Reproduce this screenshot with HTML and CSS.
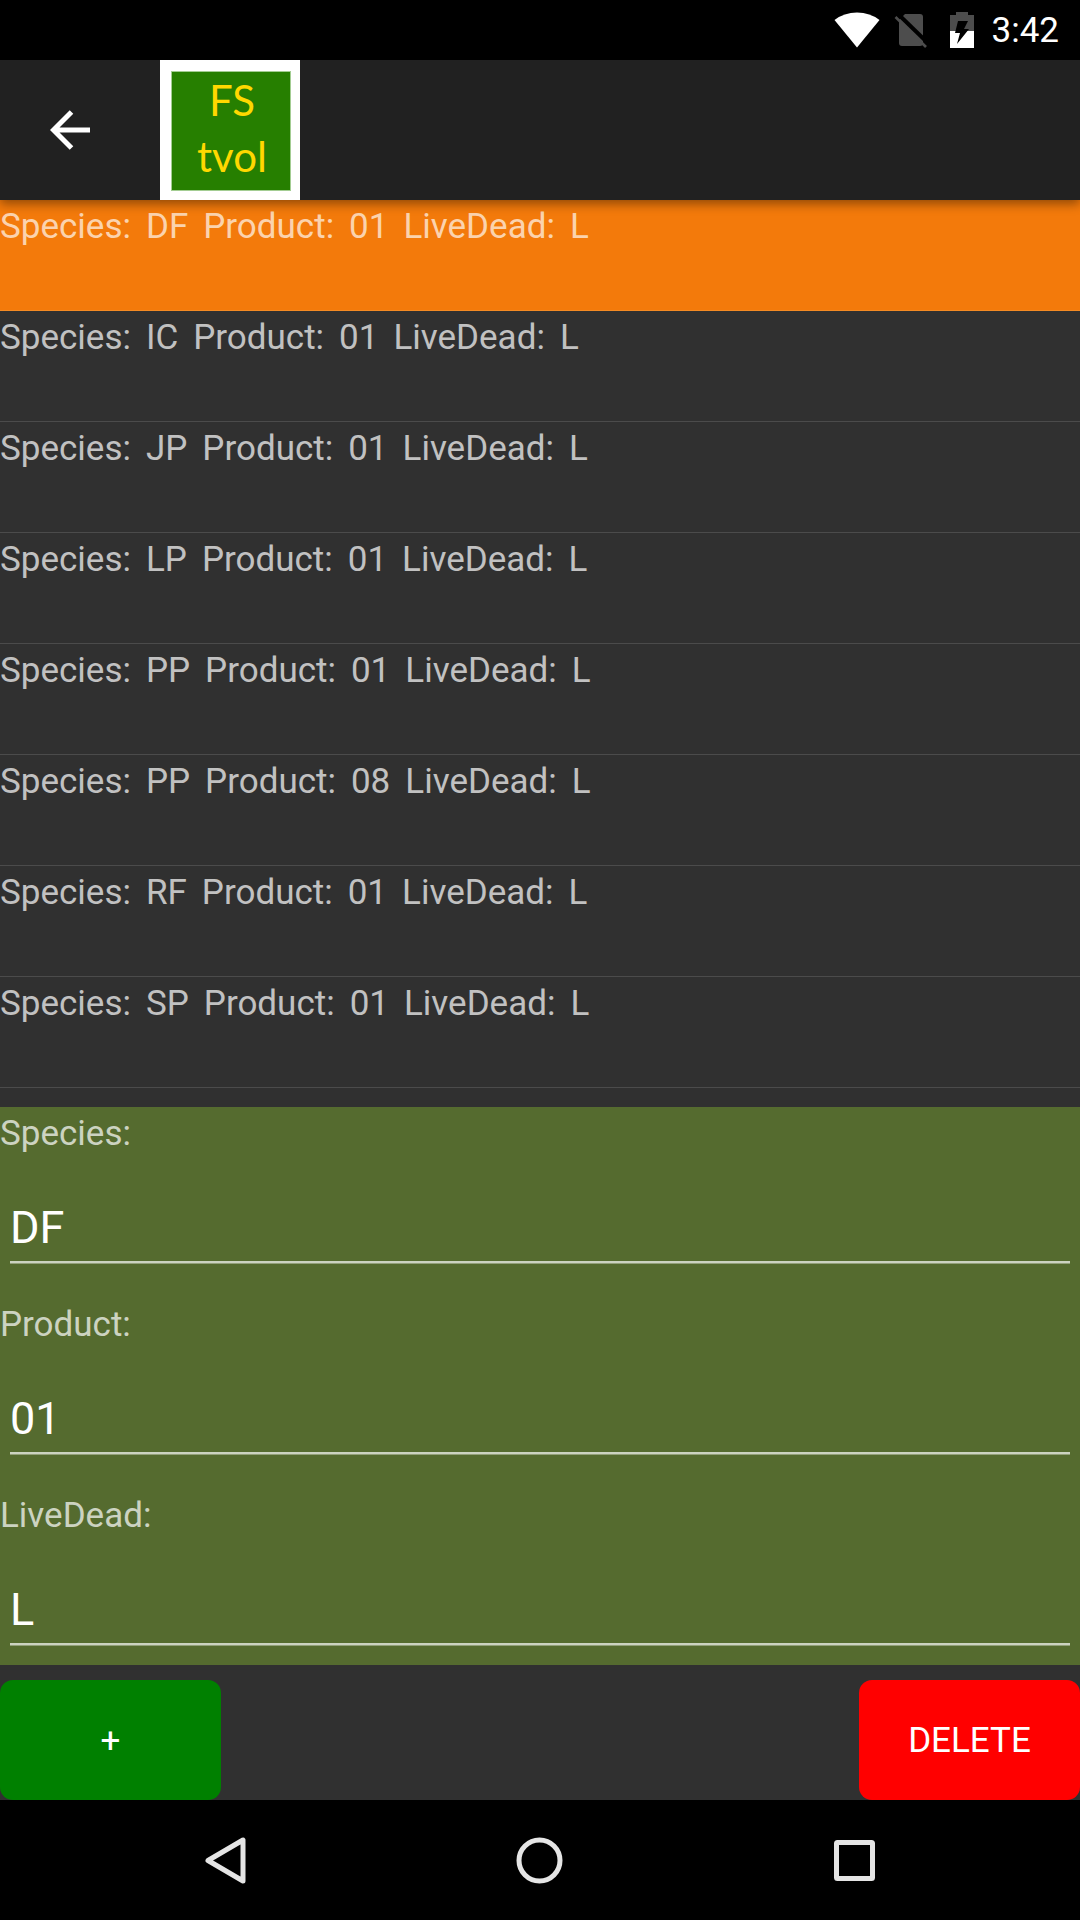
FILE: index.html
```html
<!DOCTYPE html>
<html lang="en">
<head>
<meta charset="utf-8">
<meta name="viewport" content="width=device-width, initial-scale=1">
<title>FS tvol</title>
<link rel="stylesheet" href="styles.css">
</head>
<body>
<div class="status-bar">
  <svg class="status-icon" width="46" height="60" viewBox="0 0 46 60" aria-hidden="true"><path fill="#fff" d="M23 47.500L.500 20Q10 12.500 23 12.500T45.500 20Z"/></svg>
  <svg class="status-icon" width="36" height="60" viewBox="0 0 36 60" aria-hidden="true">
    <path fill="#4d4d4d" d="M11 14H26Q29 14 29 17V43Q29 46 26 46H8Q5 46 5 43V20Z"/>
    <path stroke="#000" stroke-width="4" d="M4 14L35 44"/>
    <path stroke="#4d4d4d" stroke-width="2.600" d="M1.500 17L32 47"/>
  </svg>
  <svg class="status-icon" width="34" height="60" viewBox="0 0 34 60" aria-hidden="true">
    <path fill="#4d4d4d" d="M12 12H24V15H30V31H6V15H12Z"/>
    <path fill="#fff" d="M6 31H30V48H6Z"/>
    <path fill="#000" d="M14 21H24L20 29H25L13 44L16 33H11Z"/>
  </svg>
  <time class="clock">3:42</time>
</div>

<header class="app-bar">
  <button class="back" type="button" aria-label="Back">
    <svg width="40" height="40" viewBox="0 0 40 40" fill="none" stroke="#fff" stroke-width="5" aria-hidden="true"><path d="M40 20H4M21.500 2L3.500 20L21.500 38"/></svg>
  </button>
  <div class="logo"><div class="logo-face">FS<br>tvol</div></div>
</header>

<main class="content">
  <ul class="species-list">
    <li><button class="row selected" type="button"><span>Species:</span> <span>DF</span> <span>Product:</span> <span>01</span> <span>LiveDead:</span> <span>L</span></button></li>
    <li><button class="row" type="button"><span>Species:</span> <span>IC</span> <span>Product:</span> <span>01</span> <span>LiveDead:</span> <span>L</span></button></li>
    <li><button class="row" type="button"><span>Species:</span> <span>JP</span> <span>Product:</span> <span>01</span> <span>LiveDead:</span> <span>L</span></button></li>
    <li><button class="row" type="button"><span>Species:</span> <span>LP</span> <span>Product:</span> <span>01</span> <span>LiveDead:</span> <span>L</span></button></li>
    <li><button class="row" type="button"><span>Species:</span> <span>PP</span> <span>Product:</span> <span>01</span> <span>LiveDead:</span> <span>L</span></button></li>
    <li><button class="row" type="button"><span>Species:</span> <span>PP</span> <span>Product:</span> <span>08</span> <span>LiveDead:</span> <span>L</span></button></li>
    <li><button class="row" type="button"><span>Species:</span> <span>RF</span> <span>Product:</span> <span>01</span> <span>LiveDead:</span> <span>L</span></button></li>
    <li><button class="row" type="button"><span>Species:</span> <span>SP</span> <span>Product:</span> <span>01</span> <span>LiveDead:</span> <span>L</span></button></li>
  </ul>

  <form class="editor">
    <div class="field"><label for="species">Species:</label><input id="species" type="text" value="DF"></div>
    <div class="field"><label for="product">Product:</label><input id="product" type="text" value="01"></div>
    <div class="field"><label for="livedead">LiveDead:</label><input id="livedead" type="text" value="L"></div>
  </form>

  <div class="actions">
    <button class="action add" type="button">+</button>
    <button class="action delete" type="button">DELETE</button>
  </div>
</main>

<nav class="nav-bar">
  <button type="button" aria-label="Back"><svg width="50" height="50" viewBox="0 0 50 50" aria-hidden="true"><path d="M42 5V46L7 25.500Z"/></svg></button>
  <button type="button" aria-label="Home"><svg width="50" height="50" viewBox="0 0 50 50" aria-hidden="true"><circle cx="24.500" cy="25.500" r="20.500"/></svg></button>
  <button type="button" aria-label="Recent apps"><svg width="50" height="50" viewBox="0 0 50 50" aria-hidden="true"><rect x="7.500" y="7.500" width="36" height="36" rx="1"/></svg></button>
</nav>
</body>
</html>
```
FILE: styles.css
```css
* {
  box-sizing: border-box;
}

body {
  margin: 0;
  min-height: 100vh;
  display: flex;
  flex-direction: column;
  background: #303030;
  color: #fff;
  font: 35px/42px Roboto, sans-serif;
}

button,
input {
  margin: 0;
  padding: 0;
  border: 0;
  border-radius: 0;
  background: none;
  color: inherit;
  font: inherit;
}

svg {
  display: block;
}

.status-bar {
  display: flex;
  align-items: center;
  justify-content: flex-end;
  gap: 14px;
  height: 60px;
  padding-right: 21px;
  background: #000;
}

.clock {
  padding-top: 2px;
}

.app-bar {
  position: relative;
  display: flex;
  height: 140px;
  background: #212121;
  box-shadow: 0 4px 10px rgba(0, 0, 0, 0.4);
}

.back {
  display: flex;
  align-items: center;
  width: 160px;
  padding-left: 50px;
}

.logo {
  width: 140px;
  padding: 12px 10px 10px 12px;
  background: #fff;
}

.logo-face {
  height: 118px;
  padding-left: 2px;
  outline: 1px solid #a3cd92;
  background: #267f00;
  color: #ffd800;
  font: 42px/56px Lato, sans-serif;
  text-align: center;
}

.content {
  flex: 1;
  display: flex;
  flex-direction: column;
}

.species-list {
  flex: 1;
  margin: 0;
  padding: 0 0 19px;
  list-style: none;
}

.row {
  display: flex;
  align-items: flex-start;
  gap: 15px;
  width: 100%;
  height: 111px;
  padding-top: 6px;
  border-bottom: 1px solid #4b4b4b;
  color: #c1c1c1;
  text-align: left;
}

.row.selected {
  border-bottom-color: #f48a23;
  background: #f37a0b;
  color: #fbd3ae;
}

.editor {
  display: flex;
  flex-direction: column;
  gap: 15px;
  background: #556b2f;
}

.field {
  display: flex;
  flex-direction: column;
  height: 176px;
  padding-top: 6px;
}

.field label {
  color: #ccd3c1;
}

.field input {
  height: 68px;
  margin: 40px 10px 0;
  padding: 6px 0 7px;
  border-bottom: 2px solid #ccd3c1;
  box-shadow: 0 1px #93a07a;
  font-size: 45px;
  line-height: 53px;
  outline: none;
}

.actions {
  display: flex;
  justify-content: space-between;
  padding-top: 15px;
}

.action {
  width: 221px;
  height: 120px;
  padding-top: 2px;
  border-radius: 13px;
}

.add {
  background: #008000;
}

.delete {
  background: #f00;
}

.nav-bar {
  display: grid;
  grid-template-columns: repeat(3, 1fr);
  height: 120px;
  padding: 0 69px;
  background: #000;
}

.nav-bar button {
  display: flex;
  align-items: center;
  justify-content: center;
}

.nav-bar svg {
  fill: none;
  stroke: #e5e5e5;
  stroke-width: 5;
  stroke-linejoin: round;
}
```
